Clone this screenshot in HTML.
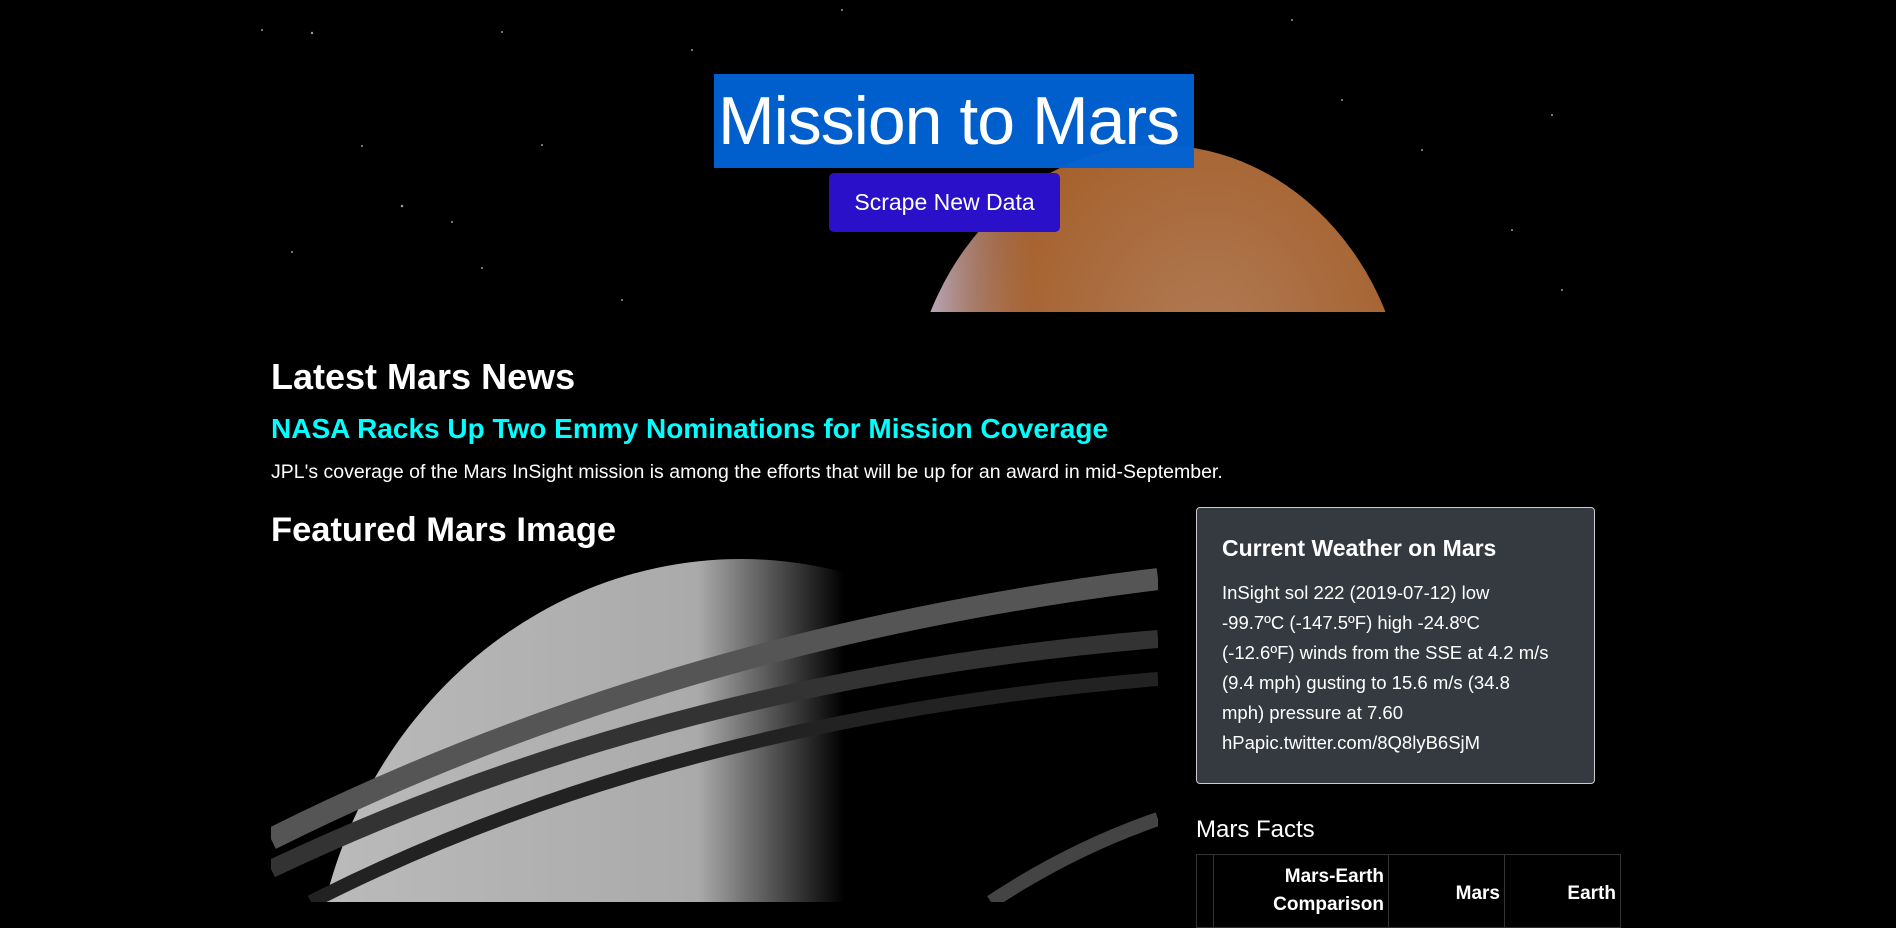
<!DOCTYPE html>
<html><head><meta charset="utf-8"><style>
*{margin:0;padding:0;box-sizing:border-box}
body{width:1896px;height:902px;overflow:hidden;background:#000;color:#fff;font-family:"Liberation Sans",sans-serif;position:relative}
.hero{position:absolute;left:242px;top:0;width:1390px;height:312px;background:#000;overflow:hidden}
.title{position:absolute;left:714px;top:74px;width:480px;height:94px;background:rgba(0,98,212,0.97);font-size:68px;font-weight:300;line-height:94px;padding-left:4px;letter-spacing:-1px;white-space:nowrap}
.btn{position:absolute;left:829px;top:173px;width:231px;height:59px;background:#2a10c8;border-radius:5px;font-size:23px;line-height:59px;text-align:center}
.h2{position:absolute;left:271px;font-size:36px;font-weight:bold;white-space:nowrap}
.card{position:absolute;left:1196px;top:507px;width:399px;height:277px;background:#343a40;border:1px solid #ccc;border-radius:4px;padding:27px 25px}
.card h5{font-size:23px;font-weight:bold;margin-bottom:16px}
.card p{font-size:18.5px;line-height:30px;white-space:nowrap}
table{position:absolute;left:1196px;top:854px;border-collapse:collapse}
td,th{border:1px solid #333;font-size:19px;text-align:right;vertical-align:top;padding:8px 4px;height:60px}
</style></head><body>
<div class="hero">
<svg width="1390" height="312" style="position:absolute;left:0;top:0">
<defs><radialGradient id="m" cx="0.6" cy="0.35" r="0.7"><stop offset="0" stop-color="#b07a55"/><stop offset="0.6" stop-color="#a6622e"/><stop offset="1" stop-color="#7a3a12"/></radialGradient>
<linearGradient id="l" x1="0" x2="1"><stop offset="0" stop-color="#c8c8ee"/><stop offset="0.25" stop-color="#a08080" stop-opacity="0"/></linearGradient></defs>
<ellipse cx="916" cy="430" rx="250" ry="285" fill="url(#m)"/>
<ellipse cx="916" cy="430" rx="250" ry="285" fill="url(#l)"/>
<g fill="#99a">
<circle cx="20" cy="30" r="1"/><circle cx="70" cy="33" r="1.2"/><circle cx="260" cy="32" r="1"/><circle cx="120" cy="146" r="1"/><circle cx="160" cy="206" r="1.3"/><circle cx="300" cy="145" r="1"/><circle cx="50" cy="252" r="1"/><circle cx="380" cy="300" r="1"/><circle cx="1100" cy="100" r="1"/><circle cx="1180" cy="150" r="1"/><circle cx="1310" cy="115" r="1"/><circle cx="1270" cy="230" r="1"/><circle cx="1320" cy="290" r="1"/><circle cx="1050" cy="20" r="1"/><circle cx="600" cy="10" r="1"/><circle cx="450" cy="50" r="1"/><circle cx="210" cy="222" r="1"/><circle cx="240" cy="268" r="1"/>
</g></svg>
</div>
<div class="title">Mission to Mars</div>
<div class="btn">Scrape New Data</div>
<div class="h2" style="top:356px">Latest Mars News</div>
<div class="h2" style="top:413px;font-size:28px;color:#0ff;font-weight:bold">NASA Racks Up Two Emmy Nominations for Mission Coverage</div>
<div style="position:absolute;left:271px;top:461px;font-size:19.5px;white-space:nowrap">JPL's coverage of the Mars InSight mission is among the efforts that will be up for an award in mid-September.</div>
<div class="h2" style="top:511px;font-size:34.5px">Featured Mars Image</div>
<svg width="887" height="343" style="position:absolute;left:271px;top:559px">
<defs><linearGradient id="s" x1="0" x2="1" y1="0" y2="0"><stop offset="0" stop-color="#bbb"/><stop offset="0.45" stop-color="#aaa"/><stop offset="0.62" stop-color="#000"/><stop offset="1" stop-color="#000"/></linearGradient></defs>
<rect width="887" height="343" fill="#000"/>
<ellipse cx="470" cy="460" rx="430" ry="460" fill="url(#s)"/>
<path d="M0 280 Q400 80 887 20" stroke="#555" stroke-width="22" fill="none"/>
<path d="M0 310 Q400 120 887 80" stroke="#333" stroke-width="18" fill="none"/>
<path d="M40 343 Q400 160 887 120" stroke="#222" stroke-width="14" fill="none"/>
<path d="M720 343 Q800 290 887 260" stroke="#444" stroke-width="14" fill="none"/>
</svg>
<div class="card"><h5>Current Weather on Mars</h5><p>InSight sol 222 (2019-07-12) low<br>-99.7ºC (-147.5ºF) high -24.8ºC<br>(-12.6ºF) winds from the SSE at 4.2 m/s<br>(9.4 mph) gusting to 15.6 m/s (34.8<br>mph) pressure at 7.60<br>hPapic.twitter.com/8Q8lyB6SjM</p></div>
<div style="position:absolute;left:1196px;top:816px;font-size:24px">Mars Facts</div>
<table><tr><th style="width:17px"></th><th style="width:175px;line-height:28px">Mars-Earth Comparison</th><th style="width:116px;padding-top:28px">Mars</th><th style="width:116px;padding-top:28px">Earth</th></tr></table>
</body></html>
